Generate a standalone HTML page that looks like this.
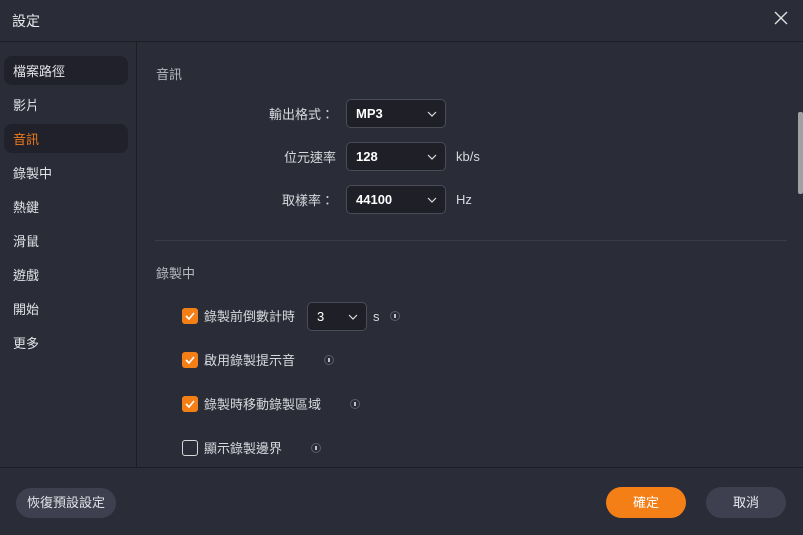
<!DOCTYPE html><html><head><meta charset="utf-8"><style>
*{margin:0;padding:0;box-sizing:border-box}
body{width:803px;height:535px;background:#2a2c37;font-family:"Liberation Sans","Noto Sans CJK TC",sans-serif;color:#d8d9de;position:relative;overflow:hidden;font-size:13px}
.a{position:absolute}
.side div{position:absolute;left:4px;width:124px;height:29px;border-radius:8px;padding-left:9px;line-height:31px;font-size:13px;color:#e2e3e8}
.sel{position:absolute;width:100px;height:29px;border:1px solid #4a4c58;border-radius:5px;background:#1e1f27;color:#fff;font-size:13px;font-weight:bold;padding-left:9px;line-height:28px}
.sel svg{position:absolute;right:8px;top:11px}
.lbl{position:absolute;text-align:right;font-size:13px;color:#d8d9de}
.cb{position:absolute;left:182px;width:16px;height:16px;border-radius:3px;background:#f57f17}
.cb svg{position:absolute;left:3px;top:4px}
.ct{position:absolute;left:204px;font-size:13px}
.info{position:absolute;width:10px;height:10px;border-radius:50%;border:1px solid #5a5c68;}
.info:after{content:"";position:absolute;left:3px;top:2px;width:2px;height:4px;background:#c0c0c8}
</style></head><body>
<div class="a" style="left:12px;top:11px;font-size:14px;color:#e8e9ee">設定</div>
<svg class="a" style="left:774px;top:11px" width="14" height="14"><path d="M1 1L13 13M13 1L1 13" stroke="#e0e0e0" stroke-width="1.4"/></svg>
<div class="a" style="left:0;top:41px;width:803px;height:1px;background:#1c1d25"></div>
<div class="a" style="left:136px;top:42px;width:1px;height:425px;background:#1c1d25"></div>
<div class="side">
<div style="top:56px;background:#20212a">檔案路徑</div>
<div style="top:90px">影片</div>
<div style="top:124px;background:#20212a;color:#f07a18">音訊</div>
<div style="top:158px">錄製中</div>
<div style="top:192px">熱鍵</div>
<div style="top:226px">滑鼠</div>
<div style="top:260px">遊戲</div>
<div style="top:294px">開始</div>
<div style="top:328px">更多</div>
</div>
<div class="a" style="left:156px;top:64px;color:#b8b9c0">音訊</div>
<div class="lbl" style="left:230px;width:104px;top:104px">輸出格式：</div>
<div class="sel" style="left:346px;top:99px">MP3<svg width="10" height="6"><path d="M1 1L5 5L9 1" stroke="#ddd" fill="none" stroke-width="1.2"/></svg></div>
<div class="lbl" style="left:230px;width:106px;top:147px">位元速率</div>
<div class="sel" style="left:346px;top:142px">128<svg width="10" height="6"><path d="M1 1L5 5L9 1" stroke="#ddd" fill="none" stroke-width="1.2"/></svg></div>
<div class="a" style="left:456px;top:149px">kb/s</div>
<div class="lbl" style="left:230px;width:104px;top:190px">取樣率：</div>
<div class="sel" style="left:346px;top:185px">44100<svg width="10" height="6"><path d="M1 1L5 5L9 1" stroke="#ddd" fill="none" stroke-width="1.2"/></svg></div>
<div class="a" style="left:456px;top:192px">Hz</div>
<div class="a" style="left:155px;top:240px;width:632px;height:1px;background:#3a3c48"></div>
<div class="a" style="left:156px;top:263px;color:#b8b9c0">錄製中</div>
<div class="cb" style="top:308px"><svg width="10" height="8"><path d="M1 4L4 7L9 1" stroke="#fff" fill="none" stroke-width="1.6"/></svg></div>
<div class="ct" style="top:306px">錄製前倒數計時</div>
<div class="sel" style="left:307px;top:302px;width:60px;font-weight:normal">3<svg width="10" height="6"><path d="M1 1L5 5L9 1" stroke="#ddd" fill="none" stroke-width="1.2"/></svg></div>
<div class="a" style="left:373px;top:309px">s</div>
<div class="info" style="left:390px;top:311px"></div>
<div class="cb" style="top:352px"><svg width="10" height="8"><path d="M1 4L4 7L9 1" stroke="#fff" fill="none" stroke-width="1.6"/></svg></div>
<div class="ct" style="top:350px">啟用錄製提示音</div>
<div class="info" style="left:324px;top:355px"></div>
<div class="cb" style="top:396px"><svg width="10" height="8"><path d="M1 4L4 7L9 1" stroke="#fff" fill="none" stroke-width="1.6"/></svg></div>
<div class="ct" style="top:394px">錄製時移動錄製區域</div>
<div class="info" style="left:350px;top:399px"></div>
<div class="cb" style="top:440px;background:none;border:1.5px solid #d8d8d8"></div>
<div class="ct" style="top:438px">顯示錄製邊界</div>
<div class="info" style="left:311px;top:443px"></div>
<div class="a" style="left:798px;top:112px;width:5px;height:82px;background:#a0a0a4;border-radius:2px"></div>
<div class="a" style="left:0;top:467px;width:803px;height:1px;background:#1c1d25"></div>
<div class="a" style="left:16px;top:488px;width:100px;height:30px;border-radius:15px;background:#3e404f;text-align:center;line-height:30px;color:#e0e1e6">恢復預設設定</div>
<div class="a" style="left:606px;top:487px;width:80px;height:31px;border-radius:16px;background:#f57f17;text-align:center;line-height:31px;color:#fff">確定</div>
<div class="a" style="left:706px;top:487px;width:80px;height:31px;border-radius:16px;background:#3e404f;text-align:center;line-height:31px;color:#e8e9ee">取消</div>
</body></html>
